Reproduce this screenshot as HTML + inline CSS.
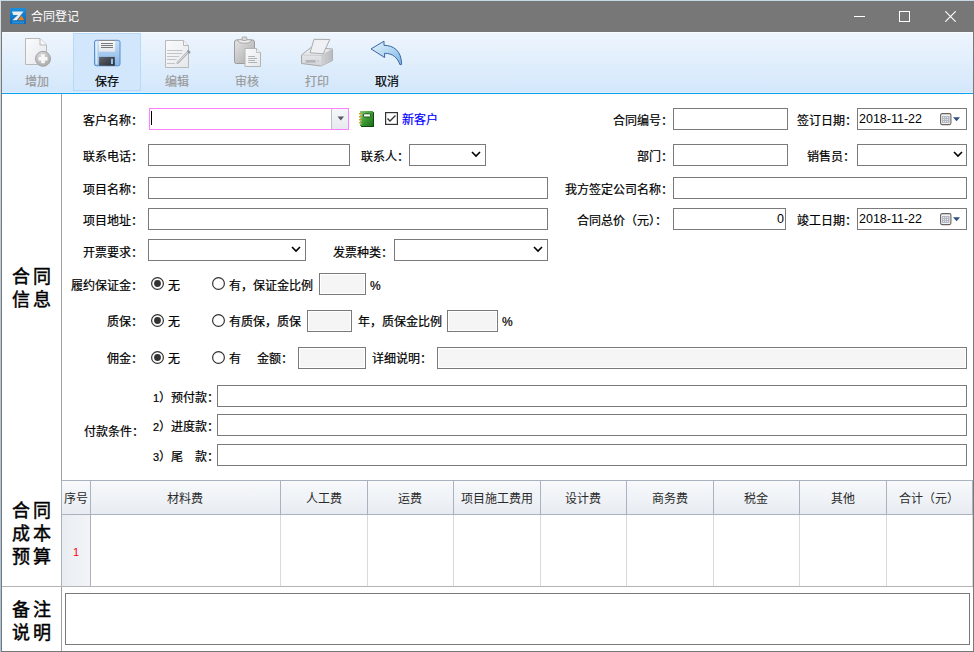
<!DOCTYPE html>
<html lang="zh-CN"><head><meta charset="utf-8">
<style>
html,body{margin:0;padding:0;}
body{width:974px;height:652px;position:relative;overflow:hidden;background:#fff;font-family:"Liberation Sans",sans-serif;font-size:12px;color:#000;}
.abs{position:absolute;}
#frameL{position:absolute;left:0;top:0;width:1px;height:652px;background:linear-gradient(#d2dce4,#b6c9d9 50%,#a6c2dc);}
#frameT{position:absolute;left:0;top:0;width:974px;height:1px;background:#c4d8e6;}
#title{position:absolute;left:1px;top:1px;width:973px;height:31px;background:#777777;}
#borderL{position:absolute;left:1px;top:32px;width:1px;height:620px;background:#787878;}
#borderR{position:absolute;left:973px;top:32px;width:1px;height:620px;background:#787878;}
#borderB{position:absolute;left:1px;top:651px;width:973px;height:1px;background:#787878;}
#toolbar{position:absolute;left:2px;top:32px;width:971px;height:61px;background:linear-gradient(#eef5fd,#d3e7fb);}
#tbtop{position:absolute;left:2px;top:32px;width:971px;height:1px;background:#f8fbff;}
#tbline{position:absolute;left:2px;top:92px;width:971px;height:1px;background:#e2eefa;}
#blue{position:absolute;left:2px;top:93px;width:971px;height:1px;background:#0aa3f4;}
#hl{position:absolute;left:73px;top:33px;width:68px;height:58px;box-sizing:border-box;border:1px solid #b6dafa;background:#d2e7fc;}
.tbt{position:absolute;top:75px;font-size:12px;line-height:12px;white-space:nowrap;-webkit-text-stroke:0.2px currentColor;}
.dim{color:#9a9a9a;}
.box{position:absolute;box-sizing:border-box;border:1px solid #7a7a7a;background:#fff;}
.dis{background:#f5f5f5;border-color:#7a7a7a;box-shadow:inset 0 0 0 1px #fff;}
.combo{border-color:#ff80ff;}
.cn{}
.lab{position:absolute;font-size:12px;line-height:12px;white-space:nowrap;-webkit-text-stroke:0.2px currentColor;}
.sec{position:absolute;font-size:18px;line-height:23px;-webkit-text-stroke:0.45px #000;letter-spacing:3px;white-space:nowrap;}
.dg{font-size:11px;}
.vdiv{position:absolute;left:61px;width:1px;background:#a0a0a0;}
.hdiv{position:absolute;left:2px;height:1px;background:#b4b4b4;}
.chev{position:absolute;}
.radio{position:absolute;width:13px;height:13px;}
.th{position:absolute;top:480px;height:35px;box-sizing:border-box;background:linear-gradient(#f6f8fb,#e9edf3);border:1px solid #a9b2be;border-left:none;}
.tht{position:absolute;top:11px;left:0;right:0;text-align:center;font-size:12px;line-height:12px;color:#2a2a2a;white-space:nowrap;}
.td{position:absolute;top:515px;height:71px;box-sizing:border-box;border-right:1px solid #d8dadd;}
.lab,.tbt,.sec,.tht,.ttl{margin-top:1px;}
</style></head><body>
<div id="frameT"></div><div id="frameL"></div>
<div id="title">
  <svg class="abs" style="left:9px;top:7px" width="16" height="16" viewBox="0 0 16 16">
    <defs><linearGradient id="lg1" x1="0" y1="0" x2="0" y2="1"><stop offset="0" stop-color="#1a8ee0"/><stop offset="1" stop-color="#0a68b8"/></linearGradient></defs>
    <rect x="0" y="0" width="16" height="16" rx="1.5" fill="url(#lg1)"/>
    <path d="M2 3.5 H13.5 L6.8 12.3 H2.3 L8 7 H3.2 Z" fill="#ececec"/>
    <path d="M8 12.3 L11.5 7.6 L14.2 12.3 Z" fill="#f27a12"/>
    <rect x="2" y="13.5" width="12" height="2" fill="#3aa8ea" opacity="0.6"/>
  </svg>
  <div class="abs ttl" style="left:30px;top:9px;color:#fff;font-size:12px;line-height:12px;white-space:nowrap">合同登记</div>
  <div class="abs" style="left:853px;top:15px;width:11px;height:1px;background:#fff"></div>
  <div class="abs" style="left:898px;top:10px;width:11px;height:11px;box-sizing:border-box;border:1px solid #fff"></div>
  <svg class="abs" style="left:944px;top:10px" width="11" height="11" viewBox="0 0 11 11"><path d="M0.3 0.3 L10.7 10.7 M10.7 0.3 L0.3 10.7" stroke="#fff" stroke-width="1.1"/></svg>
</div>
<div id="toolbar"></div><div id="tbtop"></div><div id="tbline"></div><div id="blue"></div>
<div id="hl"></div>
<svg class="abs" style="left:20px;top:34px" width="36" height="36" viewBox="0 0 36 36">
<defs>
<linearGradient id="pg" x1="0" y1="0" x2="1" y2="1"><stop offset="0" stop-color="#fafbfc"/><stop offset="1" stop-color="#e4e7eb"/></linearGradient>
<radialGradient id="cg" cx="0.4" cy="0.3" r="0.8"><stop offset="0" stop-color="#dcdcdc"/><stop offset="1" stop-color="#a4a4a4"/></radialGradient>
</defs>
<path d="M5.5 4.5 H20 L26.5 11 V30.5 H5.5 Z" fill="url(#pg)" stroke="#b9b9b9" stroke-width="1"/>
<path d="M20 4.5 V11 H26.5" fill="#f4f5f7" stroke="#b9b9b9" stroke-width="1"/>
<circle cx="23" cy="24.8" r="7.5" fill="url(#cg)" stroke="#a6a6a6" stroke-width="1"/>
<path d="M21.2 20.3 H24.8 V23 H27.5 V26.6 H24.8 V29.3 H21.2 V26.6 H18.5 V23 H21.2 Z" fill="#f8f8f8"/>
</svg>

<svg class="abs" style="left:90px;top:34px" width="36" height="36" viewBox="0 0 36 36">
<defs>
<linearGradient id="fb" x1="0" y1="0" x2="0" y2="1"><stop offset="0" stop-color="#c6dff6"/><stop offset="1" stop-color="#86b6e6"/></linearGradient>
<linearGradient id="fl" x1="0" y1="0" x2="0" y2="1"><stop offset="0" stop-color="#fbfcfd"/><stop offset="1" stop-color="#e3e7ec"/></linearGradient>
<linearGradient id="fs" x1="0" y1="0" x2="1" y2="1"><stop offset="0" stop-color="#60666e"/><stop offset="1" stop-color="#2a2c30"/></linearGradient>
</defs>
<rect x="4.5" y="6.3" width="25.5" height="25.5" rx="1.8" fill="url(#fb)" stroke="#5a8ccc" stroke-width="1"/>
<rect x="5.5" y="7.5" width="2" height="23" fill="#eaf4fd" opacity="0.8"/>
<rect x="8.8" y="6" width="16.3" height="11.7" fill="url(#fl)"/>
<rect x="8.8" y="6" width="16.3" height="1" fill="#8a8a8a"/>
<g fill="#6a6a6a"><rect x="11" y="9" width="12" height="0.9"/><rect x="11" y="11" width="12" height="0.9"/><rect x="11" y="13" width="12" height="0.9"/></g>
<rect x="9.1" y="22.9" width="15.7" height="8.8" fill="url(#fs)"/>
<rect x="21" y="24.8" width="2" height="5.3" fill="#8ec4f2"/>
</svg>

<svg class="abs" style="left:160px;top:34px" width="36" height="36" viewBox="0 0 36 36">
<path d="M5.5 6.5 H23.5 L28.5 11.5 V33.5 H5.5 Z" fill="url(#pg)" stroke="#b9b9b9" stroke-width="1"/>
<path d="M23.5 6.5 V11.5 H28.5" fill="#f4f5f7" stroke="#b9b9b9" stroke-width="1"/>
<g stroke="#c2c4c7" stroke-width="1"><path d="M7 16.5 H22.5"/><path d="M7 19.5 H22"/><path d="M7 22.5 H19"/><path d="M7 25.5 H16.5"/><path d="M7 29.5 H15"/></g>
<path d="M17 29.5 L28.5 17.5" stroke="#a9acb0" stroke-width="2.2"/>
<path d="M17.3 29 L28 17.8" stroke="#e8eaec" stroke-width="0.8"/>
<path d="M27.5 16.5 L30 19" stroke="#909397" stroke-width="2"/>
</svg>

<svg class="abs" style="left:230px;top:34px" width="36" height="36" viewBox="0 0 36 36">
<defs>
<linearGradient id="clb" x1="0" y1="0" x2="1" y2="1"><stop offset="0" stop-color="#e4e4e4"/><stop offset="1" stop-color="#a8a8a8"/></linearGradient>
</defs>
<rect x="4.5" y="6" width="20" height="23.5" rx="2" fill="url(#clb)" stroke="#9c9c9c" stroke-width="1"/>
<path d="M7.5 5.8 H21.5 Q21 9.2 14.5 9.2 Q8 9.2 7.5 5.8 Z" fill="#efefef" stroke="#9a9a9a" stroke-width="0.8"/>
<rect x="12" y="3" width="4.8" height="3.5" rx="1" fill="#dadada" stroke="#a0a0a0" stroke-width="0.8"/>
<path d="M15 14.5 H26.5 L30.5 18.5 V32.5 H15 Z" fill="url(#pg)" stroke="#b4b4b4" stroke-width="1"/>
<path d="M26.5 14.5 V18.5 H30.5" fill="#f4f5f7" stroke="#b4b4b4" stroke-width="0.8"/>
<g stroke="#a9abae" stroke-width="0.9"><path d="M18.2 22.5 H25"/><path d="M18.2 24.5 H27"/><path d="M18.2 26.5 H25"/><path d="M18.2 28.5 H27"/></g>
</svg>

<svg class="abs" style="left:298px;top:34px" width="40" height="36" viewBox="0 0 40 36">
<defs>
<linearGradient id="prb" x1="0" y1="0" x2="0" y2="1"><stop offset="0" stop-color="#f0f1f3"/><stop offset="1" stop-color="#d2d4d7"/></linearGradient>
<linearGradient id="prs" x1="0" y1="0" x2="1" y2="0"><stop offset="0" stop-color="#d0d2d5"/><stop offset="1" stop-color="#b8babd"/></linearGradient>
</defs>
<path d="M3.5 21 L13 13.5 L34.5 15 V26.5 L23 32 L3.5 29.5 Z" fill="url(#prb)" stroke="#a8a8a8" stroke-width="1"/>
<path d="M23 21.5 L34.5 15 V26.5 L23 32 Z" fill="url(#prs)"/>
<path d="M3.5 21 L23 21.5 L34.5 15" fill="none" stroke="#c4c6c9" stroke-width="0.8"/>
<path d="M16 5.3 L31.8 5.5 L25.2 19.8 L12 18.8 Z" fill="#eef0f3" stroke="#acacac" stroke-width="1"/>
<rect x="7.7" y="26" width="10" height="2.7" fill="#b4b6b9"/>
<rect x="19.5" y="26.5" width="1.2" height="1.5" fill="#bbb"/>
</svg>

<svg class="abs" style="left:368px;top:34px" width="40" height="36" viewBox="0 0 40 36">
<defs>
<linearGradient id="ar" x1="0" y1="0" x2="1" y2="1"><stop offset="0" stop-color="#e2f1fb"/><stop offset="0.5" stop-color="#b4d8f2"/><stop offset="1" stop-color="#7eb4e2"/></linearGradient>
</defs>
<path d="M3 14.9 L16 7.2 V11.3 C25.5 11.5 33.5 16.5 33.6 30.4 L32 30.8 C29.5 23.5 24.5 19.3 16.6 19.3 V23.5 Z" fill="url(#ar)" stroke="#3a66a6" stroke-width="1" stroke-linejoin="round"/>
</svg>

<div class="tbt dim" style="left:25px">增加</div>
<div class="tbt" style="left:95px">保存</div>
<div class="tbt dim" style="left:165px">编辑</div>
<div class="tbt dim" style="left:235px">审核</div>
<div class="tbt dim" style="left:305px">打印</div>
<div class="tbt" style="left:375px">取消</div>

<div id="borderL"></div><div id="borderR"></div><div id="borderB"></div>
<div class="vdiv" style="top:94px;height:557px"></div>
<div class="hdiv" style="top:586px;width:971px"></div>

<div class="sec" style="left:12px;top:265px">合同<br>信息</div>
<div class="sec" style="left:12px;top:499px">合同<br>成本<br>预算</div>
<div class="sec" style="left:12px;top:598px">备注<br>说明</div>

<div class="box combo" style="left:149px;top:108px;width:200px;height:22px;"></div>
<div class="box" style="left:673px;top:108px;width:115px;height:22px;"></div>
<div class="box datebox" style="left:857px;top:108px;width:110px;height:22px;"></div>
<div class="box" style="left:148px;top:144px;width:202px;height:22px;"></div>
<div class="box sel" style="left:409px;top:144px;width:77px;height:22px;"></div>
<div class="box" style="left:673px;top:144px;width:115px;height:22px;"></div>
<div class="box sel" style="left:857px;top:144px;width:110px;height:22px;"></div>
<div class="box" style="left:148px;top:177px;width:400px;height:22px;"></div>
<div class="box" style="left:673px;top:177px;width:294px;height:22px;"></div>
<div class="box" style="left:148px;top:208px;width:400px;height:22px;"></div>
<div class="box" style="left:673px;top:208px;width:113px;height:22px;"></div>
<div class="box datebox" style="left:857px;top:208px;width:110px;height:22px;"></div>
<div class="box sel" style="left:148px;top:239px;width:158px;height:22px;"></div>
<div class="box sel" style="left:394px;top:239px;width:154px;height:22px;"></div>
<div class="box dis" style="left:319px;top:273px;width:47px;height:22px;"></div>
<div class="box dis" style="left:307px;top:310px;width:45px;height:22px;"></div>
<div class="box dis" style="left:447px;top:310px;width:51px;height:22px;"></div>
<div class="box dis" style="left:298px;top:347px;width:68px;height:22px;"></div>
<div class="box dis" style="left:437px;top:347px;width:530px;height:22px;"></div>
<div class="box" style="left:217px;top:385px;width:750px;height:22px;"></div>
<div class="box" style="left:217px;top:414px;width:750px;height:22px;"></div>
<div class="box" style="left:217px;top:444px;width:750px;height:22px;"></div>
<div class="box" style="left:65px;top:593px;width:905px;height:52px;"></div>
<div class="lab" style="left:83px;top:114px;">客户名称<span class="cn">：</span></div>
<div class="lab" style="left:613px;top:114px;">合同编号<span class="cn">：</span></div>
<div class="lab" style="left:797px;top:114px;">签订日期<span class="cn">：</span></div>
<div class="lab" style="left:83px;top:150px;">联系电话<span class="cn">：</span></div>
<div class="lab" style="left:361px;top:150px;">联系人<span class="cn">：</span></div>
<div class="lab" style="left:637px;top:150px;">部门<span class="cn">：</span></div>
<div class="lab" style="left:807px;top:150px;">销售员<span class="cn">：</span></div>
<div class="lab" style="left:83px;top:183px;">项目名称<span class="cn">：</span></div>
<div class="lab" style="left:565px;top:183px;">我方签定公司名称<span class="cn">：</span></div>
<div class="lab" style="left:83px;top:214px;">项目地址<span class="cn">：</span></div>
<div class="lab" style="left:577px;top:214px;">合同总价（元）<span class="cn">：</span></div>
<div class="lab" style="left:797px;top:214px;">竣工日期<span class="cn">：</span></div>
<div class="lab" style="left:83px;top:246px;">开票要求<span class="cn">：</span></div>
<div class="lab" style="left:333px;top:246px;">发票种类<span class="cn">：</span></div>
<div class="lab" style="left:71px;top:279px;">履约保证金<span class="cn">：</span></div>
<div class="lab" style="left:168px;top:279px;">无</div>
<div class="lab" style="left:229px;top:279px;">有，保证金比例</div>
<div class="lab" style="left:370px;top:279px;font-family:'Liberation Sans',sans-serif">%</div>
<div class="lab" style="left:107px;top:315px;">质保<span class="cn">：</span></div>
<div class="lab" style="left:168px;top:315px;">无</div>
<div class="lab" style="left:229px;top:315px;">有质保，质保</div>
<div class="lab" style="left:358px;top:315px;">年，质保金比例</div>
<div class="lab" style="left:502px;top:315px;">%</div>
<div class="lab" style="left:107px;top:352px;">佣金<span class="cn">：</span></div>
<div class="lab" style="left:168px;top:352px;">无</div>
<div class="lab" style="left:229px;top:352px;">有</div>
<div class="lab" style="left:257px;top:352px;">金额<span class="cn">：</span></div>
<div class="lab" style="left:372px;top:352px;">详细说明<span class="cn">：</span></div>
<div class="lab" style="left:153px;top:391px;"><span class="dg">1</span>）预付款<span class="cn">：</span></div>
<div class="lab" style="left:153px;top:420px;"><span class="dg">2</span>）进度款<span class="cn">：</span></div>
<div class="lab" style="left:153px;top:450px;"><span class="dg">3</span>）尾　款<span class="cn">：</span></div>
<div class="lab" style="left:84px;top:425px;">付款条件<span class="cn">：</span></div>
<svg class="abs" style="left:151px;top:277px" width="13" height="13" viewBox="0 0 13 13"><circle cx="6.5" cy="6.5" r="5.9" fill="#fff" stroke="#333" stroke-width="1.2"/><circle cx="6.5" cy="6.5" r="3.4" fill="#333"/></svg>
<svg class="abs" style="left:212px;top:277px" width="13" height="13" viewBox="0 0 13 13"><circle cx="6.5" cy="6.5" r="5.9" fill="#fff" stroke="#333" stroke-width="1.2"/></svg>
<svg class="abs" style="left:151px;top:314px" width="13" height="13" viewBox="0 0 13 13"><circle cx="6.5" cy="6.5" r="5.9" fill="#fff" stroke="#333" stroke-width="1.2"/><circle cx="6.5" cy="6.5" r="3.4" fill="#333"/></svg>
<svg class="abs" style="left:212px;top:314px" width="13" height="13" viewBox="0 0 13 13"><circle cx="6.5" cy="6.5" r="5.9" fill="#fff" stroke="#333" stroke-width="1.2"/></svg>
<svg class="abs" style="left:151px;top:351px" width="13" height="13" viewBox="0 0 13 13"><circle cx="6.5" cy="6.5" r="5.9" fill="#fff" stroke="#333" stroke-width="1.2"/><circle cx="6.5" cy="6.5" r="3.4" fill="#333"/></svg>
<svg class="abs" style="left:212px;top:351px" width="13" height="13" viewBox="0 0 13 13"><circle cx="6.5" cy="6.5" r="5.9" fill="#fff" stroke="#333" stroke-width="1.2"/></svg>
<svg class="abs" style="left:471px;top:151px" width="10" height="7" viewBox="0 0 10 7"><path d="M1 1 L5 5 L9 1" fill="none" stroke="#000" stroke-width="1.6"/></svg>
<svg class="abs" style="left:953px;top:151px" width="10" height="7" viewBox="0 0 10 7"><path d="M1 1 L5 5 L9 1" fill="none" stroke="#000" stroke-width="1.6"/></svg>
<svg class="abs" style="left:291px;top:246px" width="10" height="7" viewBox="0 0 10 7"><path d="M1 1 L5 5 L9 1" fill="none" stroke="#000" stroke-width="1.6"/></svg>
<svg class="abs" style="left:533px;top:246px" width="10" height="7" viewBox="0 0 10 7"><path d="M1 1 L5 5 L9 1" fill="none" stroke="#000" stroke-width="1.6"/></svg>
<div class="abs" style="left:331px;top:109px;width:1px;height:20px;background:#b9c0ca"></div>
<div class="abs" style="left:332px;top:109px;width:16px;height:20px;background:linear-gradient(#f5f7fa,#e6e9ee)"></div>
<svg class="abs" style="left:337px;top:116px" width="8" height="5" viewBox="0 0 8 5"><path d="M0.5 0.5 H7 L3.75 4.5 Z" fill="#555b63"/></svg>
<div class="abs" style="left:151px;top:111px;width:1px;height:14px;background:#000"></div>
<svg class="abs" style="left:358px;top:110px" width="17" height="18" viewBox="0 0 17 18">
<defs><linearGradient id="bk" x1="0" y1="0" x2="1" y2="1"><stop offset="0" stop-color="#86c874"/><stop offset="0.5" stop-color="#3f9a34"/><stop offset="1" stop-color="#1d6e1a"/></linearGradient></defs>
<rect x="3" y="2" width="13" height="15" rx="0.5" fill="#0e4a0b"/>
<rect x="2" y="1" width="13" height="15" rx="0.5" fill="url(#bk)"/>
<rect x="5.5" y="3.8" width="7" height="3.2" rx="1" fill="#fff" stroke="#1a5a15" stroke-width="1"/>
<g fill="#e09a10"><rect x="1" y="3" width="2.2" height="1.4"/><rect x="1" y="6" width="2.2" height="1.4"/><rect x="1" y="9" width="2.2" height="1.4"/><rect x="1" y="12" width="2.2" height="1.4"/></g>
<g fill="#fff"><rect x="2.4" y="4.4" width="1" height="1"/><rect x="2.4" y="7.4" width="1" height="1"/><rect x="2.4" y="10.4" width="1" height="1"/><rect x="2.4" y="13.4" width="1" height="1"/></g>
</svg>
<svg class="abs" style="left:385px;top:112px" width="13" height="13" viewBox="0 0 13 13"><rect x="0.6" y="0.6" width="11.8" height="11.8" fill="#fff" stroke="#333" stroke-width="1.2"/><path d="M2.5 6.5 L5 9 L10.5 3.5" fill="none" stroke="#333" stroke-width="1.4"/></svg>
<div class="lab" style="left:402px;top:113px;color:#0000ff">新客户</div>
<div class="abs" style="left:859px;top:113px;font-size:12.5px;line-height:13px;white-space:nowrap">2018-11-22</div>
<svg class="abs" style="left:940px;top:113px" width="21" height="13" viewBox="0 0 21 13">
<rect x="0.6" y="0.6" width="10.3" height="11" rx="1.5" fill="#eef2fa" stroke="#6e625c" stroke-width="1.1"/>
<rect x="2" y="3" width="7.5" height="7" fill="#b4b8c0"/>
<g fill="#e8eaf0"><rect x="3" y="4" width="1" height="1"/><rect x="5" y="4" width="1" height="1"/><rect x="7" y="4" width="1" height="1"/><rect x="3" y="6" width="1" height="1"/><rect x="5" y="6" width="1" height="1"/><rect x="7" y="6" width="1" height="1"/><rect x="3" y="8" width="1" height="1"/><rect x="5" y="8" width="1" height="1"/><rect x="7" y="8" width="1" height="1"/></g>
<path d="M13 4.2 H20 L16.5 8.2 Z" fill="#2f4f80"/>
</svg>
<div class="abs" style="left:859px;top:213px;font-size:12.5px;line-height:13px;white-space:nowrap">2018-11-22</div>
<svg class="abs" style="left:940px;top:213px" width="21" height="13" viewBox="0 0 21 13">
<rect x="0.6" y="0.6" width="10.3" height="11" rx="1.5" fill="#eef2fa" stroke="#6e625c" stroke-width="1.1"/>
<rect x="2" y="3" width="7.5" height="7" fill="#b4b8c0"/>
<g fill="#e8eaf0"><rect x="3" y="4" width="1" height="1"/><rect x="5" y="4" width="1" height="1"/><rect x="7" y="4" width="1" height="1"/><rect x="3" y="6" width="1" height="1"/><rect x="5" y="6" width="1" height="1"/><rect x="7" y="6" width="1" height="1"/><rect x="3" y="8" width="1" height="1"/><rect x="5" y="8" width="1" height="1"/><rect x="7" y="8" width="1" height="1"/></g>
<path d="M13 4.2 H20 L16.5 8.2 Z" fill="#2f4f80"/>
</svg>
<div class="abs" style="left:777px;top:213px;font-size:12.5px;line-height:13px">0</div>
<div class="abs" style="left:62px;top:480px;width:911px;height:1px;background:#a9b2be"></div>
<div class="abs" style="left:62px;top:481px;width:28px;height:33px;background:linear-gradient(#f7f9fb,#e8ecf2)"><div class="tht">序号</div></div>
<div class="abs" style="left:90px;top:481px;width:190px;height:33px;background:linear-gradient(#f7f9fb,#e8ecf2)"><div class="tht">材料费</div></div>
<div class="abs" style="left:280px;top:481px;width:87px;height:33px;background:linear-gradient(#f7f9fb,#e8ecf2)"><div class="tht">人工费</div></div>
<div class="abs" style="left:367px;top:481px;width:86px;height:33px;background:linear-gradient(#f7f9fb,#e8ecf2)"><div class="tht">运费</div></div>
<div class="abs" style="left:453px;top:481px;width:87px;height:33px;background:linear-gradient(#f7f9fb,#e8ecf2)"><div class="tht">项目施工费用</div></div>
<div class="abs" style="left:540px;top:481px;width:86px;height:33px;background:linear-gradient(#f7f9fb,#e8ecf2)"><div class="tht">设计费</div></div>
<div class="abs" style="left:626px;top:481px;width:87px;height:33px;background:linear-gradient(#f7f9fb,#e8ecf2)"><div class="tht">商务费</div></div>
<div class="abs" style="left:713px;top:481px;width:86px;height:33px;background:linear-gradient(#f7f9fb,#e8ecf2)"><div class="tht">税金</div></div>
<div class="abs" style="left:799px;top:481px;width:87px;height:33px;background:linear-gradient(#f7f9fb,#e8ecf2)"><div class="tht">其他</div></div>
<div class="abs" style="left:886px;top:481px;width:86px;height:33px;background:linear-gradient(#f7f9fb,#e8ecf2)"><div class="tht">合计（元）</div></div>
<div class="abs" style="left:90px;top:481px;width:1px;height:34px;background:#a9b2be"></div>
<div class="abs" style="left:280px;top:481px;width:1px;height:34px;background:#a9b2be"></div>
<div class="abs" style="left:280px;top:515px;width:1px;height:71px;background:#d6d9de"></div>
<div class="abs" style="left:367px;top:481px;width:1px;height:34px;background:#a9b2be"></div>
<div class="abs" style="left:367px;top:515px;width:1px;height:71px;background:#d6d9de"></div>
<div class="abs" style="left:453px;top:481px;width:1px;height:34px;background:#a9b2be"></div>
<div class="abs" style="left:453px;top:515px;width:1px;height:71px;background:#d6d9de"></div>
<div class="abs" style="left:540px;top:481px;width:1px;height:34px;background:#a9b2be"></div>
<div class="abs" style="left:540px;top:515px;width:1px;height:71px;background:#d6d9de"></div>
<div class="abs" style="left:626px;top:481px;width:1px;height:34px;background:#a9b2be"></div>
<div class="abs" style="left:626px;top:515px;width:1px;height:71px;background:#d6d9de"></div>
<div class="abs" style="left:713px;top:481px;width:1px;height:34px;background:#a9b2be"></div>
<div class="abs" style="left:713px;top:515px;width:1px;height:71px;background:#d6d9de"></div>
<div class="abs" style="left:799px;top:481px;width:1px;height:34px;background:#a9b2be"></div>
<div class="abs" style="left:799px;top:515px;width:1px;height:71px;background:#d6d9de"></div>
<div class="abs" style="left:886px;top:481px;width:1px;height:34px;background:#a9b2be"></div>
<div class="abs" style="left:886px;top:515px;width:1px;height:71px;background:#d6d9de"></div>
<div class="abs" style="left:972px;top:481px;width:1px;height:34px;background:#a9b2be"></div>
<div class="abs" style="left:972px;top:515px;width:1px;height:71px;background:#d6d9de"></div>
<div class="abs" style="left:62px;top:514px;width:911px;height:1px;background:#a9b2be"></div>
<div class="abs" style="left:62px;top:515px;width:28px;height:71px;background:linear-gradient(90deg,#e9edf2,#f2f4f7)"></div>
<div class="abs" style="left:90px;top:515px;width:1px;height:71px;background:#a9b2be"></div>
<div class="abs" style="left:61px;top:480px;width:1px;height:106px;background:#a9b2be"></div>
<div class="abs" style="left:73px;top:547px;color:#ff0000;font-size:11px;line-height:11px">1</div>
</body></html>
